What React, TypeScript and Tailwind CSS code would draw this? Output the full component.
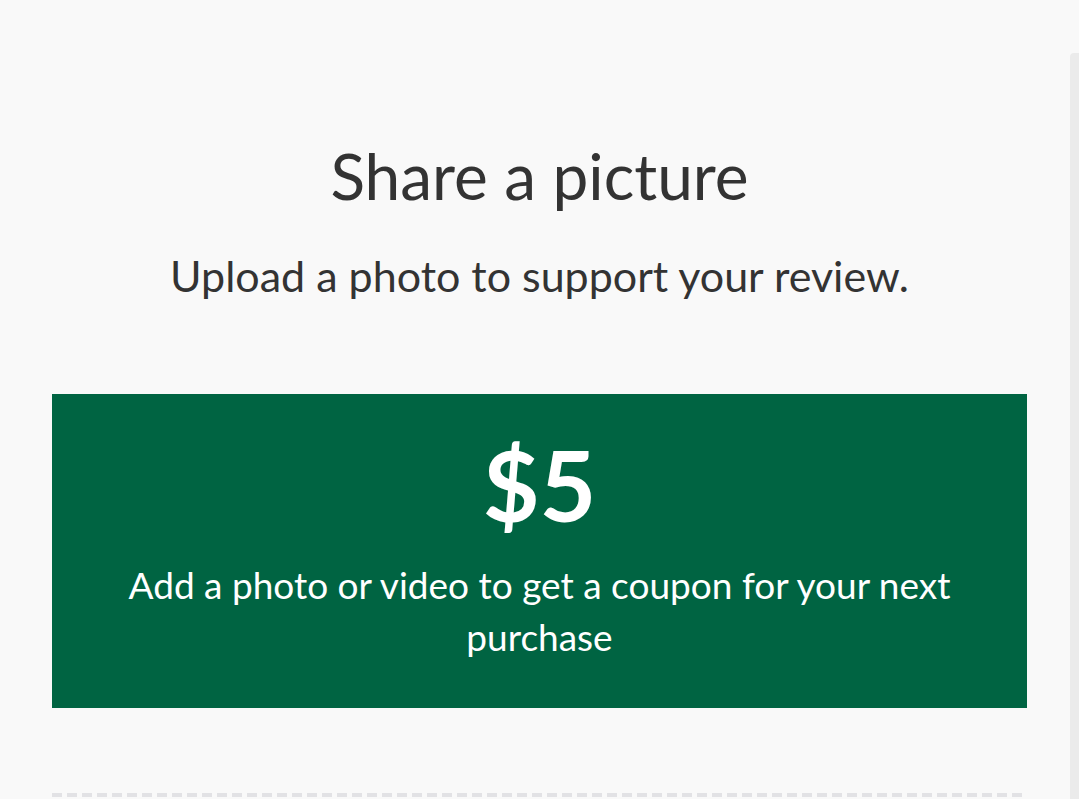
export default function App() {
  return (
    <div className="relative h-[799px] w-full overflow-hidden bg-[#f9f9f9] font-['Lato',sans-serif] text-[#333333]">
      {/* right edge strip */}
      <div className="absolute right-0 top-[53px] h-full w-[9px] rounded-tl-sm bg-[#ebebeb]" />

      <div className="flex flex-col items-center pt-[138px]">
        <h1 className="text-[64px] leading-[76px] font-normal">Share a picture</h1>
        <p className="mt-[37px] text-[43px] leading-[50px]">Upload a photo to support your review.</p>

        <div className="mt-[93px] flex w-[975px] flex-col items-center bg-[#006442] px-10 pt-[35px] pb-[45px] text-white">
          <div className="text-[98px] font-bold leading-[110px]">$5</div>
          <p className="mt-[20px] text-center text-[37px] leading-[52px]">
            Add a photo or video to get a coupon for your next
            <br />
            purchase
          </p>
        </div>

        {/* upload drop zone top edge */}
        <div className="mt-[85px] h-[4px] w-[975px] bg-[repeating-linear-gradient(90deg,#e2e2e5_0px,#e2e2e5_10px,transparent_10px,transparent_15px)]" />
      </div>
    </div>
  )
}
